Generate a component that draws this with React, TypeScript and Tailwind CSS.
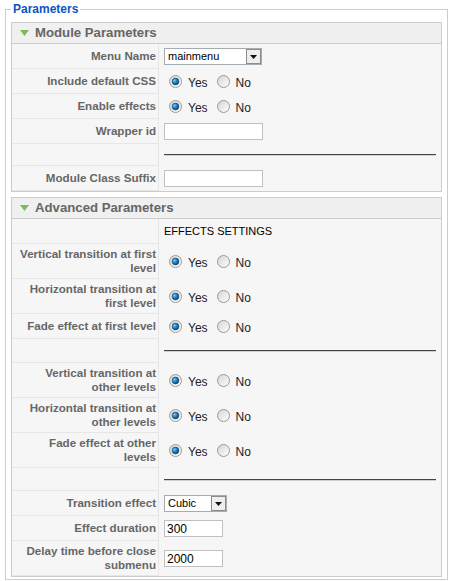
import React from 'react';

const font = { fontFamily: '"Liberation Sans", Arial, sans-serif' };

const Radio = ({ checked = false }: { checked?: boolean }) => (
  <svg width="13" height="13" viewBox="0 0 13 13" className="shrink-0">
    <defs>
      <linearGradient id="rbg" x1="0" y1="0" x2="1" y2="1">
        <stop offset="0" stopColor="#d4d4d4" />
        <stop offset="1" stopColor="#ffffff" />
      </linearGradient>
      <radialGradient id="dot" cx="0.35" cy="0.35" r="0.8">
        <stop offset="0" stopColor="#7cc8f5" />
        <stop offset="0.5" stopColor="#1478b8" />
        <stop offset="1" stopColor="#08365e" />
      </radialGradient>
    </defs>
    <circle cx="6.5" cy="6.5" r="6" fill="url(#rbg)" stroke="#9a9a9a" strokeWidth="1" />
    {checked && <circle cx="6.5" cy="6.5" r="3.4" fill="url(#dot)" stroke="#15426a" strokeWidth="0.6" />}
  </svg>
);

const YesNo = () => (
  <div className="flex items-center text-[12px] leading-[14px] text-[#222]">
    <span className="ml-[5px]"><Radio checked /></span>
    <span className="ml-[6px] mt-[2px]">Yes</span>
    <span className="ml-[9px]"><Radio /></span>
    <span className="ml-[6px] mt-[2px]">No</span>
  </div>
);

const Arrow = () => (
  <span className="flex h-[15px] w-[15px] items-center justify-center border border-[#8c8c8c] bg-[#eeeeee]">
    <svg width="7" height="4" viewBox="0 0 7 4"><path d="M0 0h7L3.5 4z" fill="#111" /></svg>
  </span>
);

const Select = ({ value, w }: { value: string; w: string }) => (
  <div className={`flex h-[17px] items-center justify-between border border-[#a5acb2] bg-white pl-[3px] text-[11px] text-black ${w}`}>
    <span>{value}</span>
    <Arrow />
  </div>
);

const Input = ({ value = '', w }: { value?: string; w: string }) => (
  <div className={`flex h-[17px] items-center border border-[#c0c0c0] bg-white pl-[2px] text-[12px] text-black ${w}`}>
    {value}
  </div>
);

const Row = ({ label, children, sep = '' }: { label?: React.ReactNode; children?: React.ReactNode; sep?: string }) => (
  <div className={`flex ${sep || 'min-h-[25px]'}`}>
    <div className="flex w-[147px] shrink-0 items-center justify-end border-b border-r border-[#e6e6e6] py-[3px] pl-[6px] pr-[2px] text-right text-[11.6px] font-bold leading-[14px] text-[#666]">
      {label}
    </div>
    <div className="flex flex-1 items-center py-[3px] pl-[5px] pr-[5px]">{children}</div>
  </div>
);

const Sep = ({ h }: { h: string }) => (
  <Row sep={h}>
    <div className="h-[2px] w-full border-b border-t border-[#444] border-b-[#d0d0d0]" />
  </Row>
);

const Panel = ({ title, children }: { title: string; children: React.ReactNode }) => (
  <div className="border border-[#cccccc] bg-[#f6f6f6]">
    <div className="flex h-[21px] items-center border-b border-[#cccccc] bg-[#f0f0f0] pl-[8px]">
      <svg width="9" height="6" viewBox="0 0 9 6"><path d="M0 0h9L4.5 6z" fill="#7dbb5a" /></svg>
      <span className="ml-[6px] text-[13.2px] font-bold text-[#666]">{title}</span>
    </div>
    {children}
  </div>
);

export default function App() {
  return (
    <div className="h-[581px] w-[449px] bg-white pt-[2px]" style={font}>
      <fieldset className="ml-[5px] w-[443px] border border-[#cccccc] px-[5px] pb-[2px] pt-[5px]">
        <legend className="px-[2px] text-[12px] font-bold leading-[15px] text-[#0b55c4]">Parameters</legend>
        <Panel title="Module Parameters">
          <Row label="Menu Name"><Select value="mainmenu" w="w-[98px]" /></Row>
          <Row label="Include default CSS"><YesNo /></Row>
          <Row label="Enable effects"><YesNo /></Row>
          <Row label="Wrapper id"><Input w="w-[99px]" /></Row>
          <Sep h="h-[22px]" />
          <Row label="Module Class Suffix"><Input w="w-[99px]" /></Row>
        </Panel>
        <div className="mt-[5px]">
          <Panel title="Advanced Parameters">
            <Row><span className="text-[11px] text-black">EFFECTS SETTINGS</span></Row>
            <Row label="Vertical transition at first level"><YesNo /></Row>
            <Row label="Horizontal transition at first level"><YesNo /></Row>
            <Row label="Fade effect at first level"><YesNo /></Row>
            <Sep h="h-[24px]" />
            <Row label="Vertical transition at other levels"><YesNo /></Row>
            <Row label="Horizontal transition at other levels"><YesNo /></Row>
            <Row label="Fade effect at other levels"><YesNo /></Row>
            <Sep h="h-[23px]" />
            <Row label="Transition effect"><Select value="Cubic" w="w-[63px]" /></Row>
            <Row label="Effect duration"><Input value="300" w="w-[59px]" /></Row>
            <Row label="Delay time before close submenu"><Input value="2000" w="w-[59px]" /></Row>
          </Panel>
        </div>
      </fieldset>
    </div>
  );
}
